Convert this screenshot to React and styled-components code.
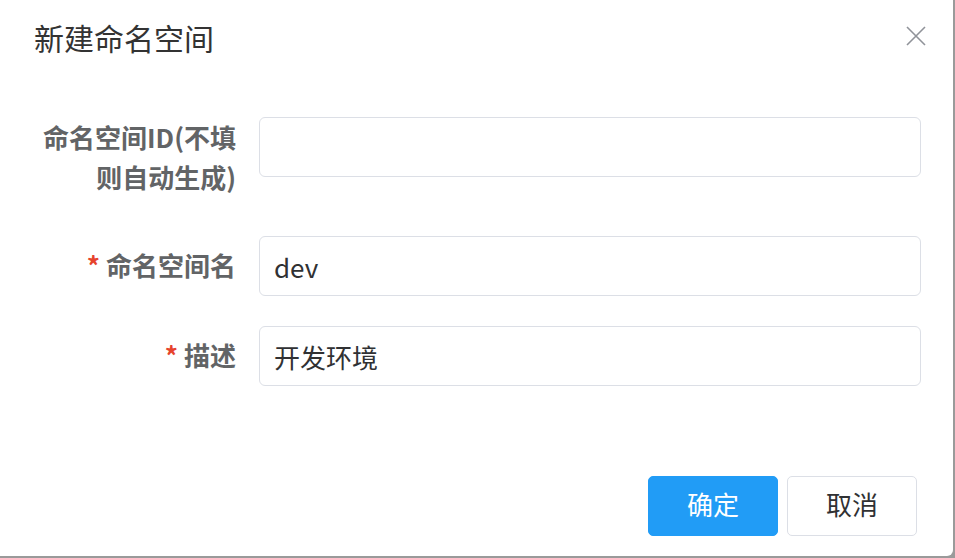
import React, { useState } from 'react';
import styled, { createGlobalStyle } from 'styled-components';

const GlobalStyle = createGlobalStyle`
  html, body {
    margin: 0;
    padding: 0;
    background: #9a9a9a;
  }
  body {
    font-family: "Noto Sans CJK SC", "Noto Sans", "Liberation Sans", sans-serif;
  }
`;

const Dialog = styled.div`
  width: 953px;
  height: 556px;
  background: #fff;
  border-radius: 0 0 6px 0;
  display: flex;
  flex-direction: column;
  box-sizing: border-box;
`;

const Header = styled.div`
  display: flex;
  justify-content: space-between;
  align-items: flex-start;
  padding: 19px 27px 0 34px;
`;

const Title = styled.span`
  font-size: 30px;
  line-height: 37px;
  color: #333;
`;

const CloseButton = styled.button`
  border: none;
  background: none;
  padding: 0;
  margin-top: 7px;
  width: 20px;
  height: 20px;
  cursor: pointer;
  display: flex;
`;

const Body = styled.div`
  padding: 61px 32px 0 30px;
  display: flex;
  flex-direction: column;
  gap: 30px;
`;

const Row = styled.div`
  display: flex;
  align-items: flex-start;
`;

const Label = styled.label`
  width: 229px;
  flex-shrink: 0;
  box-sizing: border-box;
  padding-right: 23px;
  text-align: right;
  font-size: 26px;
  font-weight: 700;
  color: #626466;
  line-height: ${p => (p.$multi ? '40px' : '58px')};
  padding-bottom: ${p => (p.$multi ? '9px' : '0')};
`;

const Star = styled.span`
  color: #e6432d;
  margin-right: 6px;
`;

const Input = styled.input`
  flex: 1;
  height: 60px;
  box-sizing: border-box;
  border: 1px solid #dcdfe6;
  border-radius: 6px;
  padding: 0 14px;
  font-family: inherit;
  font-size: 26px;
  color: #303133;
  outline: none;
  &:focus {
    border-color: #219cf6;
  }
`;

const Footer = styled.div`
  margin-top: auto;
  display: flex;
  justify-content: flex-end;
  gap: 9px;
  padding: 0 36px 20px 0;
`;

const Button = styled.button`
  width: 130px;
  height: 60px;
  border-radius: 5px;
  font-family: inherit;
  font-size: 26px;
  line-height: 1;
  padding: 0 0 4px;
  cursor: pointer;
  border: 1px solid ${p => (p.$primary ? '#219cf6' : '#dcdfe6')};
  background: ${p => (p.$primary ? '#219cf6' : '#fff')};
  color: ${p => (p.$primary ? '#fff' : '#303133')};
`;

const App = () => {
  const [form, setForm] = useState({ id: '', name: 'dev', desc: '开发环境' });
  const onChange = (e) => {
    const { name, value } = e.target;
    setForm(state => ({ ...state, [name]: value }));
  };

  return (
    <>
      <GlobalStyle />
      <Dialog>
        <Header>
          <Title>新建命名空间</Title>
          <CloseButton aria-label="关闭">
            <svg width="20" height="20" viewBox="0 0 20 20">
              <path d="M1 1L19 19M19 1L1 19" stroke="#909399" strokeWidth="1.6" fill="none" />
            </svg>
          </CloseButton>
        </Header>
        <Body>
          <Row>
            <Label $multi htmlFor="nsId">命名空间ID(不填<br />则自动生成)</Label>
            <Input id="nsId" name="id" value={form.id} onChange={onChange} />
          </Row>
          <Row>
            <Label htmlFor="nsName"><Star>*</Star>命名空间名</Label>
            <Input id="nsName" name="name" value={form.name} onChange={onChange} />
          </Row>
          <Row>
            <Label htmlFor="nsDesc"><Star>*</Star>描述</Label>
            <Input id="nsDesc" name="desc" value={form.desc} onChange={onChange} />
          </Row>
        </Body>
        <Footer>
          <Button $primary>确定</Button>
          <Button>取消</Button>
        </Footer>
      </Dialog>
    </>
  );
};

export default App;
